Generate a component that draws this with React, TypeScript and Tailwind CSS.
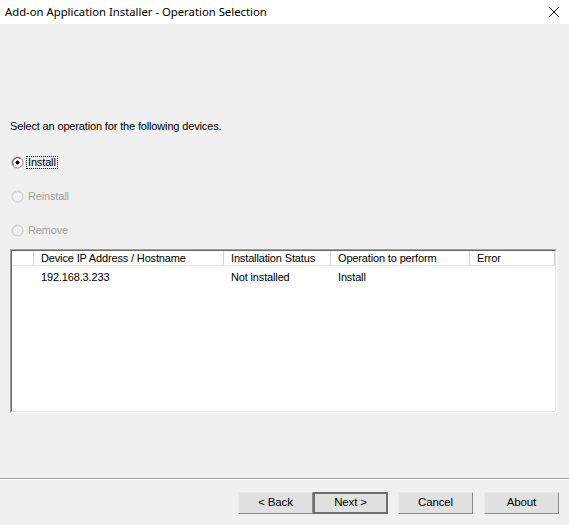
import React from "react"

function Radio({ checked, disabled }: { checked?: boolean; disabled?: boolean }) {
    return (
        <svg width="13" height="13" viewBox="0 0 13 13" className="shrink-0">
            <circle cx="6.5" cy="6.5" r="5.5" fill={disabled ? "#f0f0f0" : "#ffffff"} stroke={disabled ? "#c8c8c8" : "#8a8a8a"} />
            <path d="M2.6 9.6 A5 5 0 0 1 9.6 2.6" fill="none" stroke={disabled ? "#d8d8d8" : "#5a5a5a"} strokeWidth="1" />
            {checked && <circle cx="6.5" cy="6.5" r="2" fill="#000000" />}
        </svg>
    )
}

function Btn({ label, primary }: { label: string; primary?: boolean }) {
    return (
        <button
            className={`w-[75px] h-[22px] bg-[#e1e1e1] text-[11.5px] tracking-[-0.15px] text-black flex items-center justify-center ${
                primary ? "border-2 border-[#6e6e6e]" : "border border-t-[#e8e8e8] border-l-[#e8e8e8] border-r-[#8c8c8c] border-b-[#8c8c8c]"
            }`}
        >
            {label}
        </button>
    )
}

const cols = [
    { label: "", w: "w-[22px]" },
    { label: "Device IP Address / Hostname", w: "w-[190px]" },
    { label: "Installation Status", w: "w-[107px]" },
    { label: "Operation to perform", w: "w-[139px]" },
    { label: "Error", w: "flex-1" },
]

export default function App() {
    return (
        <div className="w-[569px] h-[525px] bg-[#f0f0f0] flex flex-col font-['Liberation_Sans',Arial,sans-serif] text-[11px] text-black overflow-hidden">
            {/* title bar */}
            <div className="h-[24px] bg-white flex items-center justify-between pl-[5px] pr-[9px] shrink-0">
                <span className="font-['Noto_Sans',sans-serif] text-[11.3px] text-black">
                    Add-on Application Installer - Operation Selection
                </span>
                <svg width="12" height="12" viewBox="0 0 12 12">
                    <path d="M1 1 L11 11 M11 1 L1 11" stroke="#111" strokeWidth="1" />
                </svg>
            </div>

            <div className="flex flex-col px-[10px] pt-[95px] tracking-[-0.15px]">
                <div className="h-[14px] leading-[14px]">
                    Select an operation for the following devices.
                </div>

                <div className="flex flex-col mt-[23px] gap-[21px]">
                    <div className="h-[13px] flex items-center gap-[3px] pl-[1px]">
                        <Radio checked />
                        <span className="px-[1px] leading-[11px] outline outline-1 outline-dotted outline-black">Install</span>
                    </div>
                    <div className="h-[13px] flex items-center gap-[4px] pl-[1px] text-[#a0a0a0]">
                        <Radio disabled />
                        <span>Reinstall</span>
                    </div>
                    <div className="h-[13px] flex items-center gap-[4px] pl-[1px] text-[#a0a0a0]">
                        <Radio disabled />
                        <span>Remove</span>
                    </div>
                </div>

                {/* list view */}
                <div className="mt-[12px] w-[547px] h-[164px] border border-t-[#a0a0a0] border-l-[#a0a0a0] border-r-white border-b-white">
                    <div className="h-full border border-t-[#696969] border-l-[#696969] border-r-[#e3e3e3] border-b-[#e3e3e3] bg-white flex flex-col">
                        <div className="h-[15px] flex border-b border-[#e5e5e5] shrink-0">
                            {cols.map((c, i) => (
                                <div key={i} className={`${c.w} h-full border-r border-[#d5d5d5] pl-[7px] pt-[1px] flex items-center whitespace-nowrap`}>
                                    {c.label}
                                </div>
                            ))}
                        </div>
                        <div className="h-[22px] flex items-center">
                            <div className="w-[22px]" />
                            <div className="w-[190px] pl-[7px]">192.168.3.233</div>
                            <div className="w-[107px] pl-[7px]">Not installed</div>
                            <div className="w-[139px] pl-[7px]">Install</div>
                            <div className="flex-1" />
                        </div>
                    </div>
                </div>
            </div>

            <div className="mt-[65px] h-[2px] border-t border-[#a0a0a0] border-b border-b-white" />

            <div className="flex justify-end pr-[10px] mt-[12px]">
                <Btn label="< Back" />
                <Btn label="Next >" primary />
                <div className="w-[10px]" />
                <Btn label="Cancel" />
                <div className="w-[11px]" />
                <Btn label="About" />
            </div>
        </div>
    )
}
